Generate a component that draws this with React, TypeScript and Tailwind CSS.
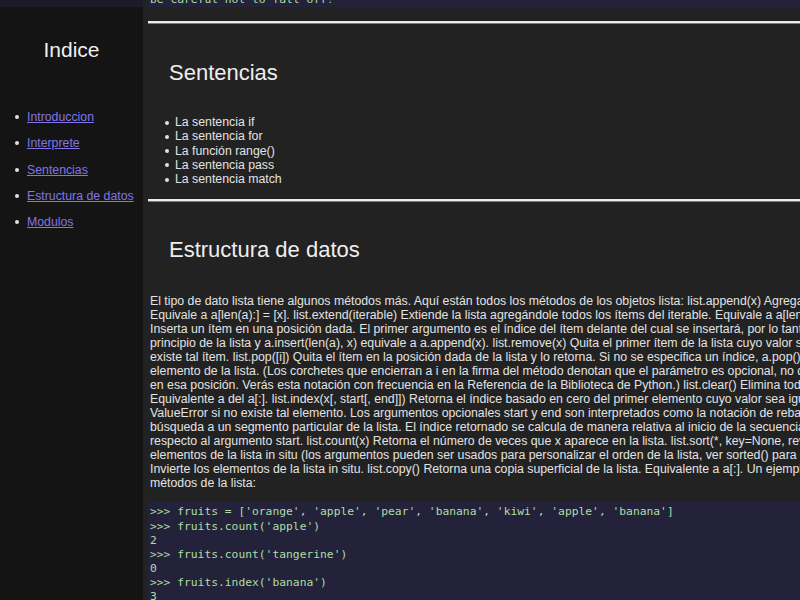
import React from "react";

const sans = { fontFamily: '"Liberation Sans", Arial, sans-serif' };
const mono = { fontFamily: '"DejaVu Sans Mono", "Liberation Mono", monospace' };

const links = ["Introduccion", "Interprete", "Sentencias", "Estructura de datos", "Modulos"];

const sentencias = [
  "La sentencia if",
  "La sentencia for",
  "La función range()",
  "La sentencia pass",
  "La sentencia match",
];

const paragraph = [
  "El tipo de dato lista tiene algunos métodos más. Aquí están todos los métodos de los objetos lista: list.append(x) Agrega un ítem al final de la lista.",
  "Equivale a a[len(a):] = [x]. list.extend(iterable) Extiende la lista agregándole todos los ítems del iterable. Equivale a a[len(a):] = iterable. list.insert(i, x)",
  "Inserta un ítem en una posición dada. El primer argumento es el índice del ítem delante del cual se insertará, por lo tanto a.insert(0, x) inserta al",
  "principio de la lista y a.insert(len(a), x) equivale a a.append(x). list.remove(x) Quita el primer ítem de la lista cuyo valor sea x. Lanza un ValueError si no",
  "existe tal ítem. list.pop([i]) Quita el ítem en la posición dada de la lista y lo retorna. Si no se especifica un índice, a.pop() quita y retorna el último",
  "elemento de la lista. (Los corchetes que encierran a i en la firma del método denotan que el parámetro es opcional, no que deberías escribir corchetes",
  "en esa posición. Verás esta notación con frecuencia en la Referencia de la Biblioteca de Python.) list.clear() Elimina todos los elementos de la lista.",
  "Equivalente a del a[:]. list.index(x[, start[, end]]) Retorna el índice basado en cero del primer elemento cuyo valor sea igual a x. Lanza una excepción",
  "ValueError si no existe tal elemento. Los argumentos opcionales start y end son interpretados como la notación de rebanadas y se usan para limitar la",
  "búsqueda a un segmento particular de la lista. El índice retornado se calcula de manera relativa al inicio de la secuencia completa en lugar de con",
  "respecto al argumento start. list.count(x) Retorna el número de veces que x aparece en la lista. list.sort(*, key=None, reverse=False) Ordena los",
  "elementos de la lista in situ (los argumentos pueden ser usados para personalizar el orden de la lista, ver sorted() para su explicación). list.reverse()",
  "Invierte los elementos de la lista in situ. list.copy() Retorna una copia superficial de la lista. Equivalente a a[:]. Un ejemplo que usa la mayoría de los",
  "métodos de la lista:",
];

const code = [
  ">>> fruits = ['orange', 'apple', 'pear', 'banana', 'kiwi', 'apple', 'banana']",
  ">>> fruits.count('apple')",
  "2",
  ">>> fruits.count('tangerine')",
  "0",
  ">>> fruits.index('banana')",
  "3",
];

function Rule() {
  return <div className="h-[3px] shrink-0 border-t-2 border-[#ececec] bg-[#7a7a7a]" />;
}

export default function App() {
  return (
    <div className="flex h-[600px] w-[800px] overflow-hidden bg-[#222222]" style={sans}>
      <aside className="flex w-[143px] shrink-0 flex-col bg-[#141414]">
        <div className="h-[7px] shrink-0 bg-[#1c1b29]" />
        <h1 className="mt-[31px] text-center text-[21px] leading-[24px] text-[#f0f0f0]">Indice</h1>
        <ul className="mt-[48px] flex flex-col gap-[12.3px] pl-[27px] text-[12.3px] leading-[14px]">
          {links.map((l) => (
            <li key={l} className="relative">
              <span className="absolute left-[-12px] top-[5px] h-[4px] w-[4px] rounded-full bg-[#e0e0e0]" />
              <a href="#" className="text-[#8276e6] underline">{l}</a>
            </li>
          ))}
        </ul>
      </aside>

      <main className="flex min-w-0 flex-1 flex-col overflow-hidden pl-[5px]">
        {/* tail of the previous code block, scrolled mostly out of view */}
        <div className="h-[7px] shrink-0 overflow-hidden bg-[#24223a] pl-[2px]">
          <div className="-mt-[7px] whitespace-pre text-[11.3px] leading-[14px] text-[#addfa3]" style={mono}>
            be careful not to fall off!
          </div>
        </div>

        <div className="mt-[14px] shrink-0">
          <Rule />
        </div>

        <h2 className="ml-[21px] mt-[36px] shrink-0 text-[22px] leading-[25px] text-[#eeeeee]">Sentencias</h2>

        <ul className="ml-[27px] mt-[30px] shrink-0 text-[12.3px] leading-[14.3px] text-[#e2e2e2]">
          {sentencias.map((s) => (
            <li key={s} className="relative">
              <span className="absolute left-[-10px] top-[5.5px] h-[4px] w-[4px] rounded-full bg-[#e0e0e0]" />
              {s}
            </li>
          ))}
        </ul>

        <div className="mt-[13px] shrink-0">
          <Rule />
        </div>

        <h2 className="ml-[21px] mt-[35px] shrink-0 text-[22px] leading-[25px] text-[#eeeeee]">Estructura de datos</h2>

        <p className="ml-[2px] mt-[32px] shrink-0 whitespace-nowrap text-[12.3px] leading-[14px] text-[#e2e2e2]">
          {paragraph.map((line, i) => (
            <span key={i} className="block">{line}</span>
          ))}
        </p>

        <pre className="mt-[12px] shrink-0 bg-[#24223a] pb-[10px] pl-[2px] pt-[3px] text-[11.3px] leading-[14.1px] text-[#addfa3]" style={mono}>
          {code.join("\n")}
        </pre>
      </main>
    </div>
  );
}
